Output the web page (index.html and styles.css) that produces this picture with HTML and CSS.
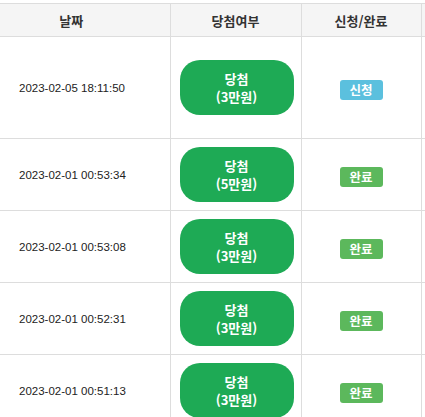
FILE: index.html
```html
<!DOCTYPE html>
<html lang="ko">

<head>
    <meta charset="UTF-8">
    <meta name="viewport" content="width=device-width, initial-scale=1.0">
    <title>당첨 내역</title>
    <link rel="stylesheet" href="styles.css">
</head>

<body>
    <table class="win-table">
        <colgroup>
            <col class="col-date">
            <col class="col-win">
            <col class="col-state">
            <col class="col-more">
        </colgroup>
        <thead>
            <tr>
                <th class="th-date">날짜</th>
                <th>당첨여부</th>
                <th>신청/완료</th>
                <th></th>
            </tr>
        </thead>
        <tbody>
            <tr class="first-row">
                <td class="date">2023-02-05 18:11:50</td>
                <td><span class="win-btn">당첨<br>(3만원)</span></td>
                <td><span class="badge badge-info">신청</span></td>
                <td></td>
            </tr>
            <tr>
                <td class="date">2023-02-01 00:53:34</td>
                <td><span class="win-btn">당첨<br>(5만원)</span></td>
                <td><span class="badge badge-done">완료</span></td>
                <td></td>
            </tr>
            <tr>
                <td class="date">2023-02-01 00:53:08</td>
                <td><span class="win-btn">당첨<br>(3만원)</span></td>
                <td><span class="badge badge-done">완료</span></td>
                <td></td>
            </tr>
            <tr>
                <td class="date">2023-02-01 00:52:31</td>
                <td><span class="win-btn">당첨<br>(3만원)</span></td>
                <td><span class="badge badge-done">완료</span></td>
                <td></td>
            </tr>
            <tr>
                <td class="date">2023-02-01 00:51:13</td>
                <td><span class="win-btn">당첨<br>(3만원)</span></td>
                <td><span class="badge badge-done">완료</span></td>
                <td></td>
            </tr>
        </tbody>
    </table>
</body>

</html>
```

FILE: styles.css
```css
body {
    margin: 0;
    padding-top: 3px;
    overflow: hidden;
    background: #fff;
    font-family: "Noto Sans CJK KR", "Liberation Sans", sans-serif;
    color: #333;
}

.win-table {
    border-collapse: collapse;
    table-layout: fixed;
    width: 425px;
}

.col-date { width: 170px; }
.col-win { width: 131px; }
.col-state { width: 120px; }
.col-more { width: 4px; }

.win-table th,
.win-table td {
    border: 1px solid #ddd;
    text-align: center;
    vertical-align: middle;
    padding: 0;
}

.win-table th:first-child,
.win-table td:first-child {
    border-left: none;
}

.win-table th:last-child,
.win-table td:last-child {
    border-right: none;
}

.win-table th {
    background: #f5f5f5;
    height: 32px;
    font-size: 13px;
    font-weight: bold;
    color: #333;
}

.win-table th.th-date {
    padding-right: 27px;
}

.win-table tbody tr {
    height: 72px;
}

.win-table tbody tr.first-row {
    height: 102px;
}

.win-table td.date {
    text-align: left;
    padding-left: 19px;
    font-family: "Liberation Sans", sans-serif;
    font-size: 11.5px;
    color: #222;
    white-space: nowrap;
}

.win-btn {
    display: inline-flex;
    align-items: center;
    justify-content: center;
    width: 114px;
    height: 55px;
    margin-left: 2px;
    border-radius: 20px;
    background: #1eaa55;
    color: #fff;
    font-size: 13px;
    font-weight: bold;
    line-height: 18px;
}

.badge {
    display: inline-block;
    width: 43px;
    height: 20px;
    line-height: 20px;
    border-radius: 3px;
    color: #fff;
    font-size: 12.5px;
    font-weight: bold;
}

.badge-info {
    background: #5bc0de;
}

.badge-done {
    background: #5cb85c;
}
```
